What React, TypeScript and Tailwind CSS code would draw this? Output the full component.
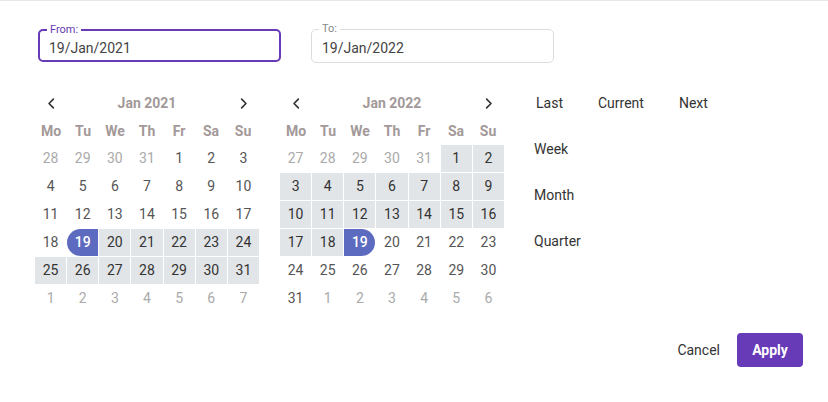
import React from 'react'

type Day = { n: number; out?: boolean; range?: boolean; sel?: 'start' | 'end' }

const weekdays = ['Mo', 'Tu', 'We', 'Th', 'Fr', 'Sa', 'Su']

function buildMonth(lead: number[], days: number, trail: number[], inRange: (d: number) => boolean, sel: { day: number; kind: 'start' | 'end' }): Day[] {
  const out: Day[] = []
  lead.forEach((n) => out.push({ n, out: true }))
  for (let d = 1; d <= days; d++) {
    if (d === sel.day) out.push({ n: d, sel: sel.kind })
    else out.push({ n: d, range: inRange(d) })
  }
  trail.forEach((n) => out.push({ n, out: true }))
  return out
}

const jan2021 = buildMonth([28, 29, 30, 31], 31, [1, 2, 3, 4, 5, 6, 7], (d) => d > 19, { day: 19, kind: 'start' })
const jan2022 = buildMonth([27, 28, 29, 30, 31], 31, [1, 2, 3, 4, 5, 6], (d) => d < 19, { day: 19, kind: 'end' })

function Chevron({ dir }: { dir: 'left' | 'right' }) {
  return (
    <svg width="15" height="15" viewBox="0 0 24 24" fill="none" stroke="#333" strokeWidth="2.6" strokeLinecap="round" strokeLinejoin="round">
      {dir === 'left' ? <path d="M15 5l-7 7 7 7" /> : <path d="M9 5l7 7-7 7" />}
    </svg>
  )
}

function Calendar({ title, days }: { title: string; days: Day[] }) {
  return (
    <div className="w-[224px]">
      <div className="grid grid-cols-7 h-[28px] items-center">
        <div className="flex justify-center"><Chevron dir="left" /></div>
        <div className="col-span-5 text-center text-[14px] font-bold text-[#a39999]">{title}</div>
        <div className="flex justify-center"><Chevron dir="right" /></div>
      </div>
      <div className="grid grid-cols-7 h-[28px] items-center">
        {weekdays.map((w) => (
          <div key={w} className="text-center text-[14px] font-bold text-[#a39999]">{w}</div>
        ))}
      </div>
      <div className="grid grid-cols-7 gap-[1px]">
        {days.map((d, i) => {
          let cls = 'text-[#555]'
          if (d.out) cls = 'text-[#aaaaaa]'
          if (d.range) cls = 'bg-[#e2e5e8] text-[#333]'
          if (d.sel === 'start') cls = 'bg-[#5c6bc0] text-white font-medium rounded-l-full'
          if (d.sel === 'end') cls = 'bg-[#5c6bc0] text-white font-medium rounded-r-full'
          return (
            <div key={i} className={`h-[27px] flex items-center justify-center text-[14px] ${cls}`}>
              {d.n}
            </div>
          )
        })}
      </div>
    </div>
  )
}

export default function App() {
  return (
    <div className="w-[828px] h-[402px] bg-white border-t border-[#e8e8e8] font-['Roboto',sans-serif] flex flex-col">
      <div className="flex mt-[28px] ml-[38px] gap-[30px]">
        <div className="relative w-[243px] h-[33px] border-2 border-[#673ab7] rounded-[5px] flex items-center pl-[9px] pt-[5px]">
          <span className="absolute -top-[8px] left-[7px] bg-white px-[3px] text-[11px] leading-[14px] text-[#673ab7]">From:</span>
          <span className="text-[14px] text-[#444]">19/Jan/2021</span>
        </div>
        <div className="relative w-[243px] h-[34px] border border-[#dcdcdc] rounded-[5px] flex items-center pl-[10px] pt-[5px]">
          <span className="absolute -top-[8px] left-[7px] bg-white px-[3px] text-[11px] leading-[14px] text-[#888]">To:</span>
          <span className="text-[14px] text-[#444]">19/Jan/2022</span>
        </div>
      </div>

      <div className="flex mt-[26px] ml-[35px] gap-[21px]">
        <Calendar title="Jan 2021" days={jan2021} />
        <Calendar title="Jan 2022" days={jan2022} />
        <div className="flex flex-col text-[14px] text-[#333]">
          <div className="flex h-[28px] items-center gap-[35px] pl-[11px]">
            <span>Last</span>
            <span>Current</span>
            <span>Next</span>
          </div>
          <div className="flex flex-col gap-[28px] mt-[23px] pl-[9px]">
            <span className="leading-[18px]">Week</span>
            <span className="leading-[18px]">Month</span>
            <span className="leading-[18px]">Quarter</span>
          </div>
        </div>
      </div>

      <div className="flex justify-end items-center mt-[21px] mr-[25px] gap-[17px]">
        <span className="text-[14px] text-[#333]">Cancel</span>
        <button className="w-[66px] h-[34px] rounded-[4px] bg-[#673ab7] text-white text-[14px] font-bold">Apply</button>
      </div>
    </div>
  )
}
